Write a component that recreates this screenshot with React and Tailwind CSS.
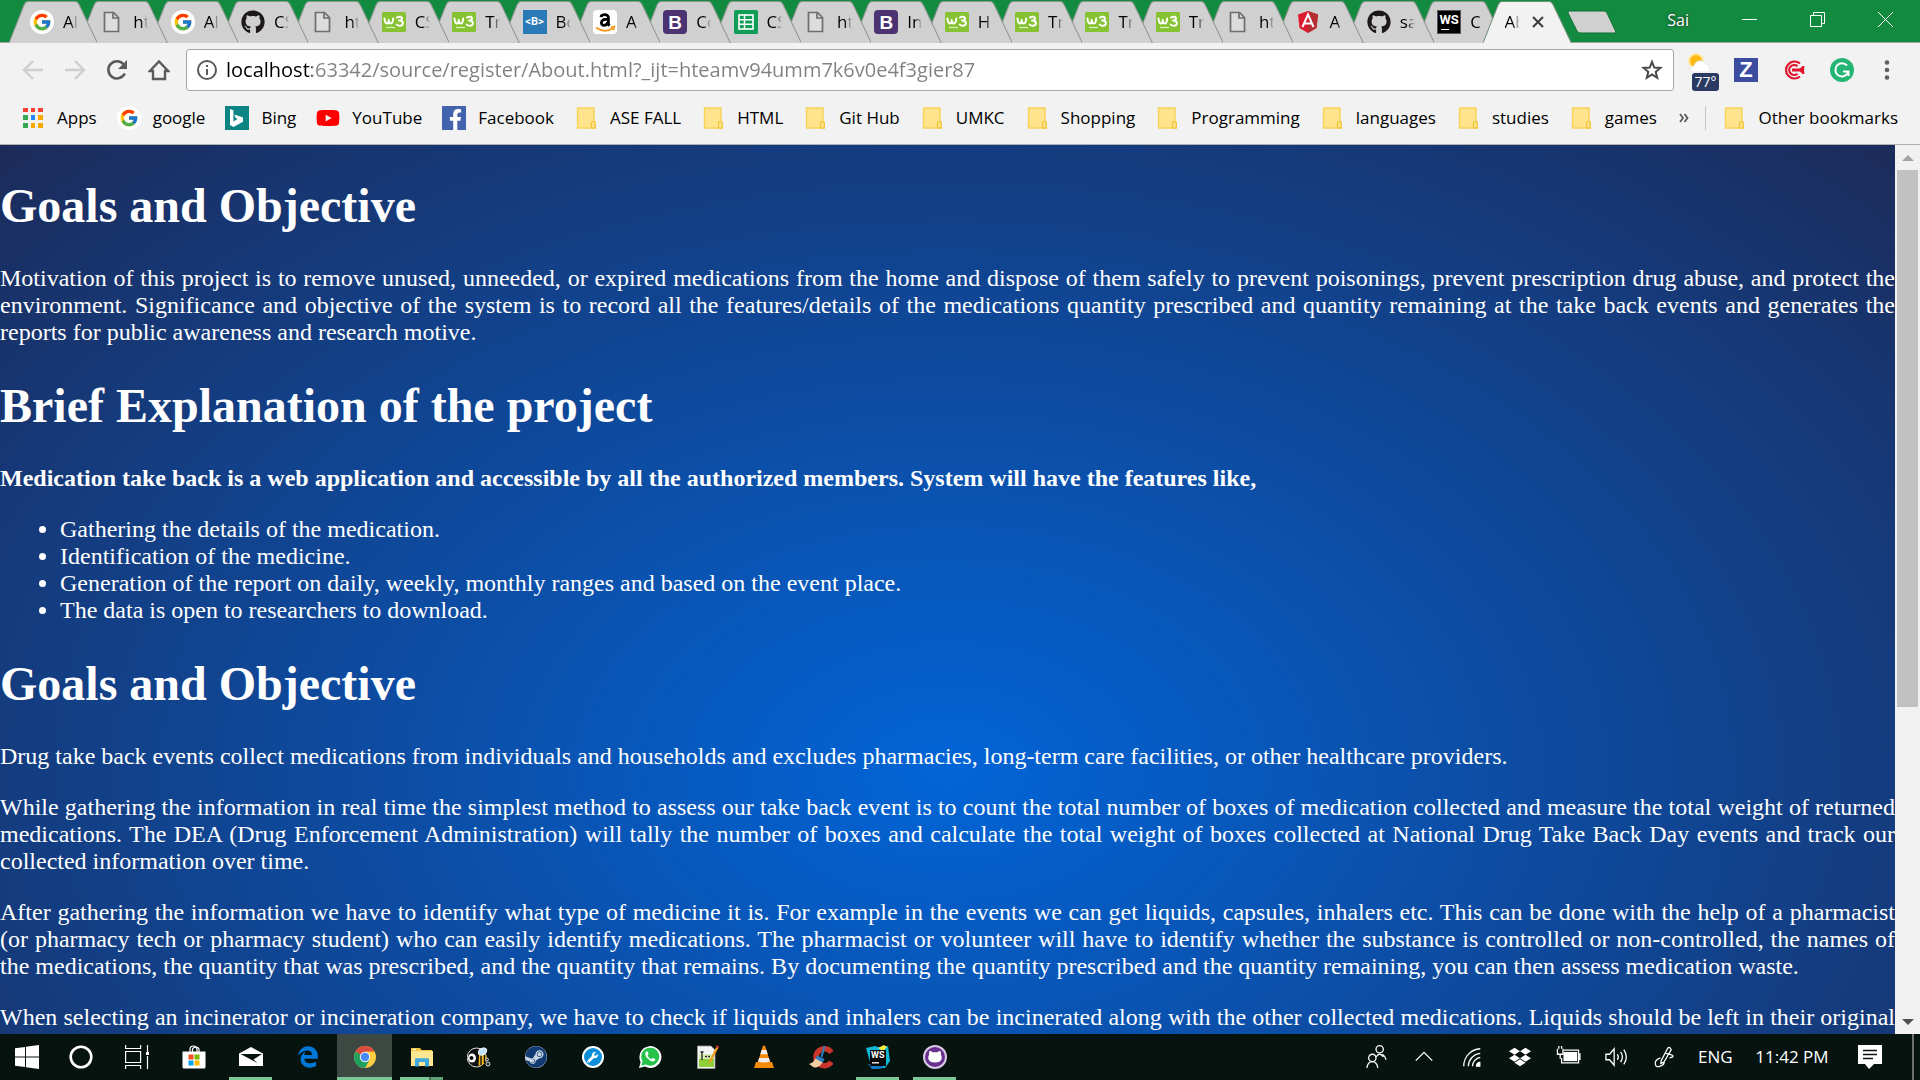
import React from "react";
import { FcGoogle } from "react-icons/fc";
import {
  FaGithub,
  FaFacebookF,
  FaYoutube,
  FaSteam,
  FaDropbox,
  FaEdgeLegacy,
  FaWrench,
  FaGithubAlt,
} from "react-icons/fa";

/* ---------- Favicons ---------- */

const GoogleIcon = () => (
  <span className="flex size-6 items-center justify-center rounded-full bg-white">
    <FcGoogle className="size-5" />
  </span>
);

const FileIcon = () => (
  <svg viewBox="0 0 24 24" className="size-6" fill="#dcdcdc" stroke="#6e6e6e" strokeWidth="1.7">
    <path d="M4.5 2.5h9l5 5v14h-14z" />
    <path d="M13 2.5v5.500h5.500" fill="none" />
  </svg>
);

const GithubIcon = () => <FaGithub className="size-6 text-[#1b1817]" />;

const W3Icon = () => (
  <svg viewBox="0 0 24 24" className="size-6">
    <rect y="2" width="24" height="20" rx="1.500" fill="#86c232" />
    <path
      d="M2.500 8.500c.4 4 1 5 2.200 5s2-1 2-3.500c0 2.500.8 3.500 2.100 3.500s2.200-1.500 2.400-5M15 7.500c1.600-1.300 5-1.200 5 1 0 1.500-1.600 2-3 2 2 0 3.900.4 3.900 2.700 0 3-4.400 3.200-6.200 1.400"
      fill="none"
      stroke="#fff"
      strokeWidth="2"
      strokeLinecap="round"
      strokeLinejoin="round"
    />
    <path d="M4 17.500h9" stroke="#dff0c0" strokeWidth="1.200" />
  </svg>
);

const BracketBIcon = () => (
  <span className="flex size-6 items-center justify-center bg-[#2a7ab8] font-['Roboto',sans-serif] text-[11px] font-bold text-white">
    &lt;B&gt;
  </span>
);

const AmazonIcon = () => (
  <span className="flex size-6 items-center justify-center rounded bg-white">
    <svg viewBox="0 0 24 24" className="size-6">
      <path
        d="M8 7.200c.4-3.200 7.400-3.600 7.400.3v6c0 1 .5 1.600 1.100 2.200M15 9.200c-4.600-.2-6.600 1-6.600 3.600 0 3.600 5.200 3.400 6.600-.6"
        fill="none"
        stroke="#000"
        strokeWidth="2.800"
      />
      <path d="M3 17.500c5.500 4 12 4 17 .8" fill="none" stroke="#f7981d" strokeWidth="1.800" />
      <path d="M17.500 17.200l4-.7-1 3.800" fill="none" stroke="#f7981d" strokeWidth="1.500" />
    </svg>
  </span>
);

const BootstrapIcon = () => (
  <span className="flex size-6 items-center justify-center rounded bg-[#4a3273] font-['Liberation_Sans',sans-serif] text-[19px] leading-none font-bold text-white">
    B
  </span>
);

const SheetsIcon = () => (
  <svg viewBox="0 0 24 24" className="size-6">
    <rect width="24" height="24" rx="1.500" fill="#0f9d58" />
    <rect x="5" y="5" width="14" height="14" fill="none" stroke="#fff" strokeWidth="1.600" />
    <path d="M5 9.700h14M5 14.300h14M10.500 5v14" stroke="#fff" strokeWidth="1.500" />
  </svg>
);

const AngularIcon = () => (
  <svg viewBox="0 0 24 24" className="size-6">
    <path d="M12 1l10 3.600-1.500 13.500L12 23l-8.500-4.900L2 4.600z" fill="#dd1b2f" />
    <path d="M12 1l10 3.600-1.500 13.500L12 23z" fill="#b52e31" />
    <path d="M6.500 17L12 4.500 17.500 17M8.500 13.500h7" fill="none" stroke="#fff" strokeWidth="2" />
  </svg>
);

const WebStormIcon = () => (
  <span className="flex size-6 flex-col justify-between border border-[#555] bg-black px-px py-[3px] font-['Roboto',sans-serif] text-[13px] leading-[12px] font-bold text-white">
    <span>WS</span>
    <span className="ml-0.5 h-px w-2 bg-white" />
  </span>
);

const BingIcon = () => (
  <svg viewBox="0 0 24 24" className="size-6">
    <rect width="24" height="24" fill="#0c8484" />
    <path d="M5 3l3.400 1.200v11.300L12.600 13l-2-1-1.300-3.400 8.700 3v4.200L8.400 21 5 19z" fill="#fff" />
  </svg>
);

const FolderIcon = () => (
  <svg viewBox="0 0 24 24" className="size-6">
    <path d="M3.500 2h16.500v14.500h1.200V22h-17.700z" fill="#ffe48d" stroke="#f7d358" strokeWidth="1.400" />
    <path d="M17.500 22v-5.500q1.800-2 3.700 0V22z" fill="#ffe48d" stroke="#efc235" strokeWidth="1.200" />
  </svg>
);

const AppsIcon = () => (
  <span className="grid size-5 grid-cols-3 gap-[3px]">
    {[
      "bg-[#f44336]", "bg-[#f44336]", "bg-[#f44336]",
      "bg-[#34a853]", "bg-[#1e88ff]", "bg-[#f9a800]",
      "bg-[#34a853]", "bg-[#f9a800]", "bg-[#f9a800]",
    ].map((c, i) => (
      <span key={i} className={c} />
    ))}
  </span>
);

/* ---------- Tab strip ---------- */

const TABS = [
  [GoogleIcon, "Al"],
  [FileIcon, "htt"],
  [GoogleIcon, "Al"],
  [GithubIcon, "CS"],
  [FileIcon, "htt"],
  [W3Icon, "CS"],
  [W3Icon, "Try"],
  [BracketBIcon, "Bo"],
  [AmazonIcon, "A"],
  [BootstrapIcon, "Co"],
  [SheetsIcon, "CS"],
  [FileIcon, "htt"],
  [BootstrapIcon, "In"],
  [W3Icon, "H"],
  [W3Icon, "Tr"],
  [W3Icon, "Tr"],
  [W3Icon, "Tr"],
  [FileIcon, "ht"],
  [AngularIcon, "A"],
  [GithubIcon, "sai"],
  [WebStormIcon, "C"],
];

function TabShape({ active }) {
  return (
    <svg
      viewBox="0 0 88 42"
      preserveAspectRatio="none"
      className="absolute inset-0 size-full"
      fill={active ? "#f2f2f2" : "#d0d0d0"}
    >
      <path d="M0 42L15 4Q16.500.5 19 .5H66Q68.500.500 70 4L88 42z" />
      <path
        d="M0 42L15 4Q16.500.5 19 .5H66Q68.500.500 70 4L88 42"
        fill="none"
        stroke={active ? "#6f8f78" : "#8f9791"}
        strokeWidth="1"
      />
    </svg>
  );
}

function TabLabel({ children }) {
  return (
    <span className="relative w-[15px] flex-none overflow-hidden mask-r-from-50% mask-r-to-100% text-left text-[17px] leading-6 whitespace-nowrap text-black">
      {children}
    </span>
  );
}

function TabStrip() {
  return (
    <div className="flex h-[43px] border-b border-[#a0a0a0] bg-[#128a3f] pt-px pl-[9px]">
      <div role="tablist" className="isolate flex min-w-0 flex-1">
        {TABS.map(([Icon, label], i) => (
          <button
            key={i}
            role="tab"
            aria-selected="false"
            style={{ zIndex: TABS.length - i }}
            className="relative -mr-[18px] flex h-[42px] min-w-0 flex-1 basis-6 items-center gap-[9px] pl-[21px] nth-[21]:-mr-[22px]"
          >
            <TabShape />
            <span className="relative flex-none">
              <Icon />
            </span>
            <TabLabel>{label}</TabLabel>
          </button>
        ))}
        <div className="relative z-30 flex h-[42px] min-w-0 flex-1 basis-6 items-center pl-[22px]">
          <TabShape active />
          <button role="tab" aria-selected="true" className="relative flex">
            <TabLabel>Ab</TabLabel>
          </button>
          <button aria-label="Close tab" className="relative ml-3">
            <svg viewBox="0 0 12 12" className="size-3" stroke="#3c3c3c" strokeWidth="2">
              <path d="M1 1l10 10M11 1L1 11" />
            </svg>
          </button>
        </div>
      </div>
      <div className="flex w-[349px] flex-none items-center justify-between pr-[27px] pb-1">
        <button aria-label="New tab" className="-ml-1 pt-1">
          <svg viewBox="0 0 50 24" className="h-6 w-[50px]" fill="#d0d0d0" stroke="#0e6e32">
            <path d="M2.500 1H37q2 0 3 2l8.500 18q1 2-1 2H13q-2 0-3-2L1 3q-.5-2 1.500-2z" />
          </svg>
        </button>
        <div className="flex items-center">
          <button className="mr-[53px] text-base leading-5 text-white text-shadow-[0_0_3px_#222]">Sai</button>
          <button aria-label="Minimize" className="mr-[53px]">
            <svg viewBox="0 0 15 15" className="size-[15px]" stroke="#fff">
              <path d="M0 7.500h15" />
            </svg>
          </button>
          <button aria-label="Restore" className="mr-[53px]">
            <svg viewBox="0 0 15 15" className="size-[15px]" stroke="#fff" fill="none">
              <path d="M.5 3.500h11v11H.5zM3.500 3.500v-3h11v11h-3" />
            </svg>
          </button>
          <button aria-label="Close">
            <svg viewBox="0 0 15 15" className="size-[15px]" stroke="#fff">
              <path d="M0 0l15 15M15 0L0 15" />
            </svg>
          </button>
        </div>
      </div>
    </div>
  );
}

/* ---------- Toolbar ---------- */

function Toolbar() {
  return (
    <div className="flex h-[54px] items-center pr-[30px] pl-[22px]">
      <button aria-label="Back" className="mr-5">
        <svg viewBox="0 0 22 22" className="size-[22px]" fill="none" stroke="#cfcfcf" strokeWidth="2.400">
          <path d="M21 11H3M11 2l-9 9 9 9" />
        </svg>
      </button>
      <button aria-label="Forward" className="mr-5">
        <svg viewBox="0 0 22 22" className="size-[22px]" fill="none" stroke="#cfcfcf" strokeWidth="2.400">
          <path d="M1 11h18M11 2l9 9-9 9" />
        </svg>
      </button>
      <button aria-label="Reload" className="mr-5">
        <svg viewBox="0 0 22 22" className="size-[22px]" fill="none" stroke="#5a5a5a" strokeWidth="2.600">
          <path d="M18.800 14.500A8.600 8.600 0 1 1 17.500 5.200" />
          <path d="M21 1v9h-9z" fill="#5a5a5a" stroke="none" />
        </svg>
      </button>
      <button aria-label="Home" className="mr-4">
        <svg viewBox="0 0 22 22" className="size-[22px]" fill="none" stroke="#5a5a5a" strokeWidth="2.400">
          <path d="M1.800 12L11 2.500 20.200 12H17v8H5v-8z" />
        </svg>
      </button>
      <div className="flex h-[42px] min-w-0 flex-1 items-center rounded-[3px] border border-[#a6a6a6] bg-white px-2.5">
        <button aria-label="Site information">
          <svg viewBox="0 0 20 20" className="size-5" fill="none" stroke="#5a5a5a" strokeWidth="2">
            <circle cx="10" cy="10" r="9" />
            <path d="M10 9v6M10 5v2" />
          </svg>
        </button>
        <input
          type="text"
          aria-label="Address"
          defaultValue="localhost:63342/source/register/About.html?_ijt=hteamv94umm7k6v0e4f3gier87"
          className="ml-[9px] min-w-0 flex-1 bg-[linear-gradient(90deg,#000_86px,#808080_86px)] bg-clip-text text-[20px] leading-7 text-transparent outline-none"
        />
        <button aria-label="Bookmark this page">
          <svg viewBox="0 0 22 22" className="size-[22px]" fill="none" stroke="#4a4a4a" strokeWidth="2">
            <path d="M11 2.800l2.300 5.700 6.100.4-4.700 3.900 1.500 6L11 15.500l-5.200 3.300 1.500-6-4.700-3.900 6.100-.4z" />
          </svg>
        </button>
      </div>
      <button aria-label="Weather, 77 degrees" className="relative ml-[13px] h-[42px] w-8 pt-0.5">
        <svg viewBox="0 0 24 24" className="mb-3.5 size-6">
          <circle cx="9" cy="9" r="8" fill="#ffe9a0" />
          <circle cx="9" cy="9" r="6" fill="#fdb913" />
          <path d="M3 19a4 4 0 0 1 4-5 6.500 6.500 0 0 1 12-2 4.500 4.500 0 0 1 2 8H5z" fill="#fff" stroke="#ddd" strokeWidth=".6" />
        </svg>
        <span className="absolute right-0 bottom-0 flex h-[18px] w-[27px] items-center justify-center rounded-[3px] bg-[#2b3a63] text-[14px] leading-none text-white">
          77°
        </span>
      </button>
      <button
        aria-label="Zotero"
        className="ml-[15px] flex size-6 items-center justify-center bg-[#3c4da0] font-['Liberation_Sans',sans-serif] text-[22px] leading-none font-bold text-white"
      >
        Z
      </button>
      <button aria-label="Target" className="ml-6">
        <svg viewBox="0 0 24 24" className="size-6" fill="none" stroke="#e0142c" strokeWidth="2.200">
          <path d="M18 5.500a8.500 8.500 0 1 0 0 13" />
          <path d="M15.500 8.200a5 5 0 1 0 0 7.600" />
          <path d="M10 12h11" strokeWidth="3" />
          <path d="M16.500 12l4-4h2L22 12l.5 4h-2z" fill="#e0142c" stroke="none" />
        </svg>
      </button>
      <button aria-label="Grammarly" className="ml-6">
        <svg viewBox="0 0 24 24" className="size-6" fill="none" stroke="#fff" strokeWidth="2">
          <circle cx="12" cy="12" r="12" fill="#24b574" stroke="none" />
          <path d="M17 7.500A6.600 6.600 0 1 0 17.800 15M13 13.500h5.500V18" />
        </svg>
      </button>
      <button aria-label="Menu" className="ml-[30px]">
        <svg viewBox="0 0 6 20" className="h-5 w-1.5" fill="#5f6064">
          <circle cx="3" cy="2.500" r="2.300" />
          <circle cx="3" cy="10" r="2.300" />
          <circle cx="3" cy="17.500" r="2.300" />
        </svg>
      </button>
    </div>
  );
}

const BOOKMARKS = [
  ["Apps", <AppsIcon />],
  ["google", <GoogleIcon />],
  ["Bing", <BingIcon />],
  ["YouTube", <FaYoutube className="size-6 flex-none text-[#f00]" />],
  [
    "Facebook",
    <span className="flex size-6 items-end justify-end bg-[#4463ad]">
      <FaFacebookF className="size-[21px] text-white" />
    </span>,
  ],
  ["ASE FALL", <FolderIcon />],
  ["HTML", <FolderIcon />],
  ["Git Hub", <FolderIcon />],
  ["UMKC", <FolderIcon />],
  ["Shopping", <FolderIcon />],
  ["Programming", <FolderIcon />],
  ["languages", <FolderIcon />],
  ["studies", <FolderIcon />],
  ["games", <FolderIcon />],
];

function Bookmark({ label, icon }) {
  return (
    <a href="#" className="flex flex-none items-center gap-3 whitespace-nowrap">
      <span className="flex size-6 items-center justify-center">{icon}</span>
      {label}
    </a>
  );
}

function BookmarksBar() {
  return (
    <nav className="flex h-[48px] items-center justify-between border-b border-[#b0b0b0] pr-[22px] pb-1.5 pl-[21px] text-[17px] leading-6 text-black">
      <div className="flex min-w-0 items-center gap-5">
        {BOOKMARKS.map(([label, icon]) => (
          <Bookmark key={label} label={label} icon={icon} />
        ))}
      </div>
      <div className="flex items-center">
        <button aria-label="More bookmarks">
          <svg viewBox="0 0 10 10" className="size-2.5" fill="none" stroke="#5a5a5a" strokeWidth="1.800">
            <path d="M1 1l3 4-3 4M5.500 1l3 4-3 4" />
          </svg>
        </button>
        <span className="mx-4 h-6 w-px bg-[#c4c4c4]" />
        <Bookmark label="Other bookmarks" icon={<FolderIcon />} />
      </div>
    </nav>
  );
}

/* ---------- Page ---------- */

const Heading = ({ children }) => (
  <h1 className="my-8 text-5xl leading-[55px] font-bold">{children}</h1>
);

function Page() {
  return (
    <div className="flex min-h-0 flex-1">
      <main className="min-w-0 flex-1 overflow-hidden">
        <article className="flow-root min-h-[141%] bg-[radial-gradient(ellipse_farthest-corner_at_center,#0264d6_1%,#1c2b5a_100%)] pt-px text-justify font-['Liberation_Serif','Times_New_Roman',serif] text-2xl leading-[27px] text-white">
          <Heading>Goals and Objective</Heading>
          <p className="my-6">
            Motivation of this project is to remove unused, unneeded, or expired medications from the home and dispose of
            them safely to prevent poisonings, prevent prescription drug abuse, and protect the environment. Significance
            and objective of the system is to record all the features/details of the medications quantity prescribed and
            quantity remaining at the take back events and generates the reports for public awareness and research motive.
          </p>
          <Heading>Brief Explanation of the project</Heading>
          <p className="my-6 font-bold">
            Medication take back is a web application and accessible by all the authorized members. System will have the
            features like,
          </p>
          <ul className="my-6 list-disc pl-[60px]">
            <li>Gathering the details of the medication.</li>
            <li>Identification of the medicine.</li>
            <li>Generation of the report on daily, weekly, monthly ranges and based on the event place.</li>
            <li>The data is open to researchers to download.</li>
          </ul>
          <Heading>Goals and Objective</Heading>
          <p className="my-6">
            Drug take back events collect medications from individuals and households and excludes pharmacies, long-term
            care facilities, or other healthcare providers.
          </p>
          <p className="my-6">
            While gathering the information in real time the simplest method to assess our take back event is to count
            the total number of boxes of medication collected and measure the total weight of returned medications. The
            DEA (Drug Enforcement Administration) will tally the number of boxes and calculate the total weight of boxes
            collected at National Drug Take Back Day events and track our collected information over time.
          </p>
          <p className="my-6">
            After gathering the information we have to identify what type of medicine it is. For example in the events we
            can get liquids, capsules, inhalers etc. This can be done with the help of a pharmacist (or pharmacy tech or
            pharmacy student) who can easily identify medications. The pharmacist or volunteer will have to identify
            whether the substance is controlled or non-controlled, the names of the medications, the quantity that was
            prescribed, and the quantity that remains. By documenting the quantity prescribed and the quantity remaining,
            you can then assess medication waste.
          </p>
          <p className="my-6 [text-align-last:justify]">
            When selecting an incinerator or incineration company, we have to check if liquids and inhalers can be
            incinerated along with the other collected medications. Liquids should be left in their original
          </p>
        </article>
      </main>
      <div className="flex w-[25px] flex-none flex-col items-center bg-[#f1f1f1]">
        <button aria-label="Scroll up" className="flex h-[25px] w-full items-center justify-center">
          <svg viewBox="0 0 12 6" className="h-1.5 w-3" fill="#a3a3a3">
            <path d="M0 6l6-6 6 6z" />
          </svg>
        </button>
        <div className="w-full flex-1 px-0.5">
          <div className="h-[64%] bg-[#c1c1c1]" />
        </div>
        <button aria-label="Scroll down" className="flex h-[25px] w-full items-center justify-center">
          <svg viewBox="0 0 12 6" className="h-1.5 w-3" fill="#505050">
            <path d="M0 0l6 6 6-6z" />
          </svg>
        </button>
      </div>
    </div>
  );
}

/* ---------- Taskbar ---------- */

const StartIcon = () => (
  <svg viewBox="0 0 24 24" className="size-6" fill="#fff">
    <path d="M0 3.300l10-1.400v9.600H0zM11 1.700L24 0v11.500H11zM0 12.500h10v9.600L0 20.700zM11 12.500h13V24l-13-1.700z" />
  </svg>
);

const CortanaIcon = () => (
  <svg viewBox="0 0 24 24" className="size-6" fill="none" stroke="#fff" strokeWidth="2.600">
    <circle cx="12" cy="12" r="10.300" />
  </svg>
);

const TaskViewIcon = () => (
  <svg viewBox="0 0 24 24" className="size-6" fill="none" stroke="#fff" strokeWidth="1.200">
    <path d="M.6 0v3.500h15V0M.6 6.500h15v11H.6zM.6 24v-3.500h15V24M22.500 0v7M22.500 11v13" />
    <path d="M21 7h3v3h-3z" fill="#fff" stroke="none" />
  </svg>
);

const StoreIcon = () => (
  <svg viewBox="0 0 24 24" className="size-6">
    <path d="M8 7V4.500a3.500 3.500 0 0 1 7 0V7M10.500 7V4a3.500 3.500 0 0 1 6.500 0v3" fill="none" stroke="#fff" strokeWidth="1.200" />
    <path d="M.5 6.500h23V22q0 1.500-1.500 1.500H2Q.5 23.500.5 22z" fill="#fff" />
    <path d="M6.500 9.500h5v5h-5z" fill="#f04e23" />
    <path d="M12.500 9.500h5v5h-5z" fill="#7fba00" />
    <path d="M6.500 15.500h5v5h-5z" fill="#00a4ef" />
    <path d="M12.500 15.500h5v5h-5z" fill="#ffb900" />
  </svg>
);

const MailIcon = () => (
  <svg viewBox="0 0 24 24" className="size-6">
    <path d="M0 8.500L12 2l12 6.500V21H0z" fill="#fff" />
    <path d="M1.500 9H23l-8.500 5.500 4 3.500z" fill="#07130e" />
  </svg>
);

const ChromeIcon = () => (
  <svg viewBox="0 0 24 24" className="size-6">
    <circle cx="12" cy="12" r="11" fill="#ffcd40" />
    <path d="M12 12L2.500 6.500A11 11 0 0 1 21.500 6.500H12z" fill="#dd4b3e" />
    <path d="M2.500 6.500A11 11 0 0 0 12 23l4.700-8.300L12 12 7.300 14.700z" fill="#1aa15f" />
    <path d="M2.500 6.500l4.800 8.200L12 7H21.500" fill="#dd4b3e" />
    <path d="M2.500 6.500l4.800 8.200 4.700-2.700z" fill="#1aa15f" />
    <circle cx="12" cy="12" r="5.200" fill="#f1f1f1" />
    <circle cx="12" cy="12" r="4.200" fill="#4a8af4" />
  </svg>
);

const ExplorerIcon = () => (
  <svg viewBox="0 0 24 24" className="size-6">
    <path d="M1 3h9l1.500 2H22v3H1z" fill="#f5c342" />
    <path d="M1 6h22v15H1z" fill="#ffe690" />
    <path d="M3 4.500h3" stroke="#fff" strokeWidth="1.200" />
    <path d="M5 21.500v-7.500q0-.8.800-.8h12.400q.8 0 .8.800v7.500h-4v-4.500H9v4.500z" fill="#3fa9e0" />
  </svg>
);

const BeeIcon = () => (
  <svg viewBox="0 0 24 24" className="size-6">
    <ellipse cx="9.500" cy="12.500" rx="9.300" ry="9.500" fill="#111" stroke="#ddd" strokeWidth="1" />
    <path d="M12 10h7.500q1 6-4 10l-4 .8z" fill="#f2b71b" />
    <path d="M14 10v10M17.500 10v8" stroke="#111" strokeWidth="1.400" />
    <ellipse cx="5" cy="13" rx="4" ry="4.500" fill="#fff" />
    <circle cx="4.500" cy="13" r="2" fill="#111" />
    <ellipse cx="15.500" cy="6.500" rx="4.500" ry="3.200" fill="#bfe0fa" stroke="#fff" transform="rotate(-30 15.500 6.500)" />
    <circle cx="21" cy="19" r="2" fill="#222" stroke="#ddd" />
    <circle cx="20" cy="14.500" r="1.400" fill="#222" stroke="#ddd" />
  </svg>
);

const SteamIcon = () => (
  <span className="flex size-[22px] items-center justify-center rounded-full bg-[#c9d6e2]">
    <FaSteam className="size-[22px] text-[#113a72]" />
  </span>
);

const WrenchIcon = () => (
  <span className="flex size-[22px] items-center justify-center rounded-full border-2 border-white bg-[#0a8fd8]">
    <FaWrench className="size-[11px] text-white" />
  </span>
);

const WhatsAppIcon = () => (
  <svg viewBox="0 0 24 24" className="size-6">
    <path d="M1 23l1.600-6A11 11 0 1 1 7 21.600z" fill="#fff" />
    <path d="M3.300 20.800l1.200-4.500a9 9 0 1 1 3.300 3.200z" fill="#27c24c" />
    <path d="M8.500 6.500c-2 1.200-1.500 4.500 1.500 7.300s6 3.400 7.200 1.500c.5-1.100-.3-1.500-2.200-2.300-.8-.2-1 1.200-1.800 1-1.600-.5-3-2-3.600-3.500-.1-.8 1.200-.9.800-2-.6-1.500-.9-2.500-1.900-2z" fill="#fff" />
  </svg>
);

const NotepadIcon = () => (
  <svg viewBox="0 0 24 24" className="size-6">
    <path d="M2.500 1H16l4 4v18.500H2.500z" fill="#f3f3f3" stroke="#999" strokeWidth=".8" />
    <path d="M4 13h15v9H4z" fill="#8fd03a" />
    <path d="M4 9h15v5H4z" fill="#d9efb5" />
    <path d="M7 7v8M5.500 7h3M10 11.500h2M13 11.500h2" stroke="#222" strokeWidth="1.300" />
    <path d="M14.500 17.500L22.500 2" stroke="#e8a020" strokeWidth="2.400" />
    <path d="M22 3L23 .8" stroke="#c33" strokeWidth="2.400" />
  </svg>
);

const VlcIcon = () => (
  <svg viewBox="0 0 24 24" className="size-6">
    <path d="M4 17h16l2 6H2z" fill="#f58a0b" />
    <path d="M12 0.500q1 0 1.200.8L18.500 18q-6.500 3-13 0L10.800 1.300Q11 .5 12 .5z" fill="#f58a0b" />
    <path d="M9.600 5h4.800l1.300 4.200H8.300zM7.100 13h9.800l1.100 3.400q-6 2-12 0z" fill="#eee" />
  </svg>
);

const CCleanerIcon = () => (
  <svg viewBox="0 0 24 24" className="size-6">
    <path d="M22.500 7.500A8.500 8.500 0 1 0 22.500 17" fill="none" stroke="#c9352b" strokeWidth="5.500" />
    <path d="M15.500 1L12.500 12" stroke="#2c7fc4" strokeWidth="2" />
    <path d="M8 10.500l7.500 3.500-2 4-7-4z" fill="#2c7fc4" />
    <path d="M6.500 13.500l7 4Q10 23 5 22.500L0 19q4-1 6.500-5.500z" fill="#f2cfa3" />
  </svg>
);

const WebStormAppIcon = () => (
  <svg viewBox="0 0 24 24" className="size-6">
    <path d="M0 3l9-2 6 2 7-2 2 15-5 7-13 1-2-7z" fill="#0fb8d6" />
    <path d="M2 19h15v4l-11 1z" fill="#1478c8" />
    <path d="M12 3l6-3 3 2-4 4z" fill="#f8ef42" />
    <rect x="4" y="5" width="16" height="16" fill="#0a0a0a" />
    <path d="M6 17.800h7" stroke="#fff" strokeWidth="1.300" />
    <text x="5" y="13" fontFamily="Roboto, sans-serif" fontSize="9" fontWeight="700" fill="#fff">
      WS
    </text>
  </svg>
);

const GithubAppIcon = () => (
  <span className="flex size-6 items-center justify-center rounded-full border-2 border-[#d8cbe2] bg-[#69308f]">
    <svg viewBox="0 0 16 16" className="size-4" fill="#fff">
      <path d="M2.500 2q2 0 3 1.200h5Q11.500 2 13.500 2q.8 2 .3 3.500Q15 7 14.700 9.500 14 13.500 8 13.500T1.300 9.500Q1 7 2.200 5.500 1.700 4 2.500 2z" />
    </svg>
  </span>
);

const APPS = [
  ["Store", StoreIcon],
  ["Mail", MailIcon, "open"],
  ["Edge", () => <FaEdgeLegacy className="size-[22px] text-[#0078d7]" />],
  ["Chrome", ChromeIcon, "active"],
  ["File Explorer", ExplorerIcon, "stacked"],
  ["Bee", BeeIcon],
  ["Steam", SteamIcon],
  ["Wrench", WrenchIcon],
  ["WhatsApp", WhatsAppIcon],
  ["Notepad++", NotepadIcon],
  ["VLC", VlcIcon],
  ["CCleaner", CCleanerIcon],
  ["WebStorm", WebStormAppIcon, "open"],
  ["GitHub Desktop", GithubAppIcon, "open"],
];

function TaskButton({ name, state, children }) {
  return (
    <button aria-label={name} className="relative flex w-[57px] flex-none items-center justify-center">
      {state === "active" && <span className="absolute inset-x-px inset-y-0 border-b-3 border-[#79c896] bg-[#3e4843]" />}
      {state === "open" && <span className="absolute inset-x-[7px] bottom-0 h-[3px] bg-[#79c896]" />}
      {state === "stacked" && (
        <span className="absolute inset-x-[7px] bottom-0 flex h-[3px]">
          <span className="flex-1 bg-[#79c896]" />
          <span className="w-3.5 border-l-2 border-[#47775a] bg-[#5f9e77]" />
        </span>
      )}
      <span className="relative">{children}</span>
    </button>
  );
}

const TRAY = [
  [
    "People",
    <g key="g">
      <circle cx="16" cy="3.500" r="4" />
      <path d="M12 12q4-6 8 0M19 9q3 2 4 6" />
      <circle cx="8" cy="13" r="4" />
      <path d="M2 24q1-7 6-7t6 7" />
    </g>,
  ],
  ["Show hidden icons", <path key="p" d="M3 16l9-9 9 9" />],
  [
    "Network",
    <g key="g">
      <path d="M3 22A19 19 0 0 1 21 3M8 22A14.500 14.500 0 0 1 21 8M12.500 22a10 10 0 0 1 8.500-9.500" />
      <path d="M17 22q0-3.500 3.500-4v4z" fill="#fff" />
    </g>,
  ],
  ["Dropbox", null],
  [
    "Battery",
    <g key="g">
      <path d="M7 6.500h15v10H7z" fill="#fff" stroke="none" />
      <path d="M7 4.500h16.500v14H5V13M23.500 8.500H25v6h-1.500" />
      <path d="M.5 3v6h6V3M2 0v3M5 0v3M3.500 9v5" />
    </g>,
  ],
  [
    "Volume",
    <g key="g">
      <path d="M1 9h4l5-6v18l-5-6H1z" />
      <path d="M13.500 9q2 3 0 6M17 6.500q4 5.500 0 11M20.500 4q5.500 8 0 16" />
    </g>,
  ],
  [
    "Windows Ink",
    <path key="p" d="M9 16L16 2.500q1.500-2 3 0t0 3L12 17.500 8.500 19zM14 8q6 1 7.500 2.500T18 13M8 13q-6 2-5.500 6.500T8 22t4-5" />,
  ],
];

function Taskbar() {
  return (
    <footer className="flex h-[46px] flex-none justify-between bg-[#07130e] text-white">
      <div className="flex">
        <button aria-label="Start" className="flex w-[54px] items-center justify-center">
          <StartIcon />
        </button>
        <button aria-label="Cortana" className="flex w-[54px] items-center justify-center">
          <CortanaIcon />
        </button>
        <button aria-label="Task view" className="flex w-[57px] items-center justify-center">
          <TaskViewIcon />
        </button>
        {APPS.map(([name, Icon, state]) => (
          <TaskButton key={name} name={name} state={state}>
            <Icon />
          </TaskButton>
        ))}
      </div>
      <div className="flex items-center">
        {TRAY.map(([name, drawing]) => (
          <button key={name} aria-label={name} className="flex w-12 items-center justify-center">
            {drawing ? (
              <svg viewBox="0 0 24 24" className="size-[22px] overflow-visible" fill="none" stroke="#fff" strokeWidth="1.400">
                {drawing}
              </svg>
            ) : (
              <FaDropbox className="size-[22px]" />
            )}
          </button>
        ))}
        <button className="ml-2.5 w-[34px] text-center text-[17px] leading-6">ENG</button>
        <button className="ml-[22px] w-[76px] text-center text-[17px] leading-6 whitespace-nowrap">11:42 PM</button>
        <button aria-label="Notifications" className="mr-[30px] ml-[28px]">
          <svg viewBox="0 0 24 24" className="size-6">
            <path d="M0 0h24v19h-8l-5 5-4-5H0z" fill="#fff" />
            <path d="M5 5.500h14M5 9.500h14M5 13.500h10" stroke="#111" strokeWidth="1.300" />
          </svg>
        </button>
        <button aria-label="Show desktop" className="h-full w-2 border-l-2 border-[#6c6f6d]" />
      </div>
    </footer>
  );
}

export default function App() {
  return (
    <div className="flex h-screen flex-col overflow-hidden bg-[#f2f2f2] font-['Open_Sans','Noto_Sans',sans-serif]">
      <TabStrip />
      <Toolbar />
      <BookmarksBar />
      <Page />
      <Taskbar />
    </div>
  );
}
